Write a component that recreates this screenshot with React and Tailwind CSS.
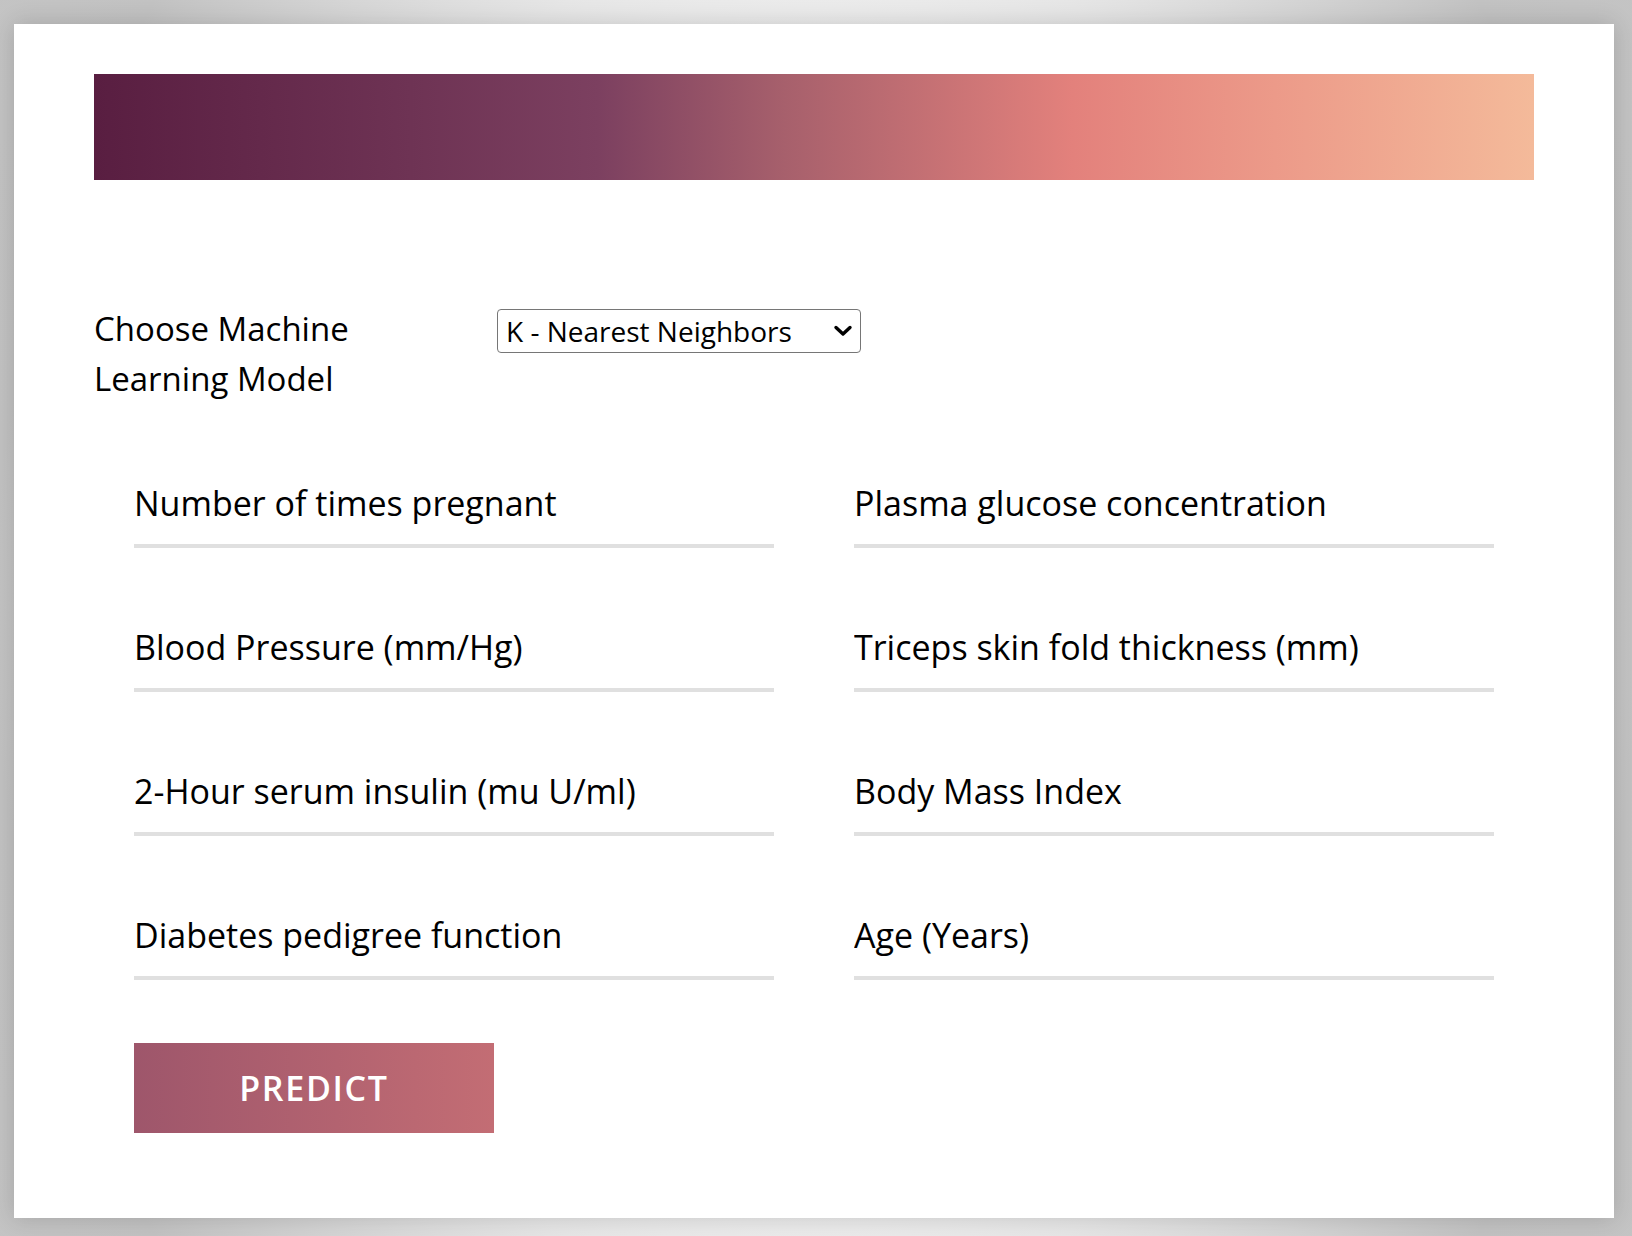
import { useState } from 'react';

const fields = [
  ['pregnancies', 'Number of times pregnant'],
  ['glucose', 'Plasma glucose concentration'],
  ['bloodPressure', 'Blood Pressure (mm/Hg)'],
  ['skinThickness', 'Triceps skin fold thickness (mm)'],
  ['insulin', '2-Hour serum insulin (mu U/ml)'],
  ['bmi', 'Body Mass Index'],
  ['pedigree', 'Diabetes pedigree function'],
  ['age', 'Age (Years)'],
];

function ChevronDown() {
  return (
    <svg width="20" height="12" viewBox="0 0 20 12" fill="none">
      <path d="M3 2.5 L10 9 L17 2.5" stroke="#000" strokeWidth="3.4" strokeLinecap="round" strokeLinejoin="round" />
    </svg>
  );
}

export default function App() {
  const [model, setModel] = useState('knn');
  const [values, setValues] = useState({});

  return (
    <div className="min-h-screen bg-[radial-gradient(ellipse_60%_100%_at_50%_50%,#f2f2f2_40%,#e6e6e6_56%,#c2c2c2_84%,#c4c4c4_100%)] pt-[24px] pl-[14px] pb-[18px] font-['Open_Sans',sans-serif] text-black">
      <div className="w-[1600px] h-[1194px] bg-white pt-[50px] px-[80px] shadow-[0_0_22px_rgba(0,0,0,0.16)]">
        {/* header strip */}
        <div className="h-[106px] bg-[linear-gradient(to_right,#591e41_0%,#6e3354_22%,#7c4060_35%,#a7606c_48%,#e3817c_68%,#ec9a89_82%,#f4ba9a_100%)]" />

        <div className="mt-[124px] flex items-start">
          <label htmlFor="model" className="w-[375px] mr-[28px] text-[33px] leading-[50px]">
            Choose Machine Learning Model
          </label>
          <div className="relative mt-[5px]">
            <select
              id="model"
              value={model}
              onChange={(e) => setModel(e.target.value)}
              className="appearance-none w-[364px] h-[44px] border border-[#767676] rounded-[4px] bg-white pl-[8px] pr-[40px] text-[28px] leading-[42px] text-black"
            >
              <option value="knn">K - Nearest Neighbors</option>
              <option value="svm">Support Vector Machine</option>
              <option value="rf">Random Forest</option>
              <option value="lr">Logistic Regression</option>
            </select>
            <span className="absolute right-[8px] top-[16px] pointer-events-none">
              <ChevronDown />
            </span>
          </div>
        </div>

        <form className="mt-[79px] px-[40px]" onSubmit={(e) => e.preventDefault()}>
          <div className="grid grid-cols-2 gap-x-[80px] gap-y-[79px]">
            {fields.map(([name, label]) => (
              <input
                key={name}
                name={name}
                type="text"
                placeholder={label}
                value={values[name] || ''}
                onChange={(e) => setValues({ ...values, [name]: e.target.value })}
                className="block w-full h-[65px] pb-[21px] text-[34px] leading-[40px] border-b-4 border-[#e0e0e0] outline-none placeholder:text-black"
              />
            ))}
          </div>
          <button
            type="submit"
            className="mt-[63px] w-[360px] h-[90px] bg-[linear-gradient(to_right,#9e566b,#c36d74)] text-white text-[34px] font-semibold tracking-[0.05em]"
          >
            PREDICT
          </button>
        </form>
      </div>
    </div>
  );
}
